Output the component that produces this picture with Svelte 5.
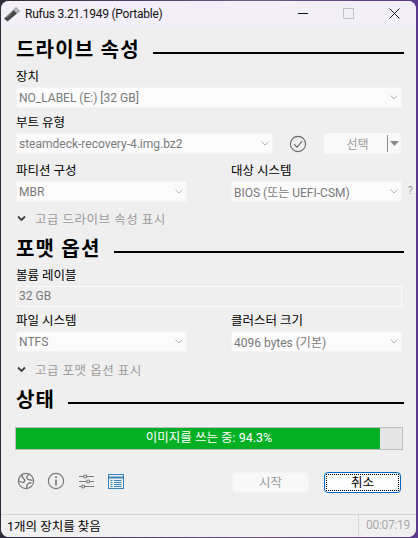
<script>
    let progress = 94.3;
</script>

{#snippet chevron()}
    <svg class="chevron" width="8" height="5" viewBox="0 0 8 5"><path d="M.5.5L4 4 7.500.5" fill="none" stroke="#b4b4b4" stroke-width="1"/></svg>
{/snippet}

{#snippet heading(text)}
    <div class="heading"><span>{text}</span><i></i></div>
{/snippet}

{#snippet dropdown(text)}
    <div class="select"><span>{text}</span>{@render chevron()}</div>
{/snippet}

{#snippet advanced(text)}
    <div class="advanced">
        <svg width="9" height="7" viewBox="0 0 9 7"><path d="M1 1.500l3.500 3.500 3.500-3.500" fill="none" stroke="#404040" stroke-width="1.800"/></svg>
        <span>{text}</span>
    </div>
{/snippet}

<div class="window">
    <div class="titlebar">
        <svg class="usb" width="16" height="16" viewBox="0 0 16 16">
            <path d="M0 12.500L9.500 4l3.500 3.500L3.500 15.500z" fill="#484848"/>
            <path d="M10 3.500L12 1.500l3.500 3.500-2 2z" fill="#bdbdbd" stroke="#666" stroke-width=".6"/>
            <path d="M2.500 11.500L8.500 6" stroke="#8f8f8f" stroke-width="1"/>
        </svg>
        <span class="title">Rufus 3.21.1949 (Portable)</span>
        <div class="controls">
            <span class="min"></span>
            <span class="max"></span>
            <svg class="close" width="11" height="11" viewBox="0 0 11 11"><path d="M.5.5l10 10M10.500.5l-10 10" stroke="#222" stroke-width="1"/></svg>
        </div>
    </div>

    <div class="content">
        {@render heading('드라이브 속성')}
        <div class="label first">장치</div>
        {@render dropdown('NO_LABEL (E:) [32 GB]')}

        <div class="label boot-label">부트 유형</div>
        <div class="boot">
            {@render dropdown('steamdeck-recovery-4.img.bz2')}
            <svg class="check" width="18" height="18" viewBox="0 0 18 18">
                <circle cx="9" cy="9" r="7.600" fill="none" stroke="#666" stroke-width="1.100"/>
                <path d="M5 9.200l3 3 5.200-6" fill="none" stroke="#666" stroke-width="1.100"/>
            </svg>
            <div class="split">
                <span class="split-text">선택</span>
                <i></i>
                <svg width="9" height="5" viewBox="0 0 9 5"><path d="M0 0h9L4.500 5z" fill="#8a8a8a"/></svg>
            </div>
        </div>

        <div class="two">
            <div>
                <div class="label">파티션 구성</div>
                {@render dropdown('MBR')}
            </div>
            <div>
                <div class="label">대상 시스템</div>
                {@render dropdown('BIOS (또는 UEFI-CSM)')}
                <span class="help">?</span>
            </div>
        </div>
        {@render advanced('고급 드라이브 속성 표시')}

        {@render heading('포맷 옵션')}
        <div class="label first">볼륨 레이블</div>
        <div class="input">32 GB</div>

        <div class="two tight">
            <div>
                <div class="label">파일 시스템</div>
                {@render dropdown('NTFS')}
            </div>
            <div>
                <div class="label">클러스터 크기</div>
                {@render dropdown('4096 bytes (기본)')}
            </div>
        </div>
        {@render advanced('고급 포맷 옵션 표시')}

        {@render heading('상태')}
        <div class="progress">
            <div class="fill" style="width: {progress}%"></div>
            <span>이미지를 쓰는 중: {progress}%</span>
        </div>

        <div class="actions">
            <div class="tools">
                <svg width="18" height="18" viewBox="0 0 18 18" fill="none" stroke="#777" stroke-width="1.200">
                    <circle cx="9" cy="9" r="7.600"/>
                    <path d="M5.500 2.500C4 5 6 6 7 7s1 2 0 3-3 0-5-1M12 2.500c-2 1-3 3-1.500 4.500s3 .5 5 1.500M10 16c-1-2 0-3.500 1.500-4.500s2-1 3-.5" stroke-width="1.300"/>
                </svg>
                <svg width="18" height="18" viewBox="0 0 18 18" fill="none" stroke="#777" stroke-width="1.200">
                    <circle cx="9" cy="9" r="7.600"/>
                    <path d="M9 7.500v6" stroke-width="1.600"/>
                    <path d="M9 4.300v1.800" stroke-width="1.600"/>
                </svg>
                <svg width="15" height="15" viewBox="0 0 15 15" fill="none" stroke="#777" stroke-width="1.100">
                    <path d="M0 2.500h4.500M8 2.500h7M0 7.500h7.500M11 7.500h4M0 12.500h2.500M6 12.500h9"/>
                    <circle cx="6.200" cy="2.500" r="1.500"/>
                    <circle cx="9.200" cy="7.500" r="1.500"/>
                    <circle cx="4.200" cy="12.500" r="1.500"/>
                </svg>
                <svg width="16" height="15" viewBox="0 0 16 15" fill="none" stroke="#3a84bd">
                    <rect x=".5" y=".5" width="15" height="14"/>
                    <path d="M1 3.500h14" stroke-width="2"/>
                    <path d="M2.500 6.500h2M6 6.500h7.500M2.500 8.500h2M6 8.500h7.500M2.500 10.500h2M6 10.500h7.500M2.500 12.500h2M6 12.500h7.500"/>
                </svg>
            </div>
            <div class="buttons">
                <div class="btn">시작</div>
                <div class="btn focused"><span>취소</span></div>
            </div>
        </div>
    </div>

    <div class="statusbar">
        <span class="status">1개의 장치를 찾음</span>
        <span class="time">00:07:19</span>
    </div>
</div>

<style>
    :global(body) {
        margin: 0;
        background: linear-gradient(90deg, #2e2a3a 0%, #6c5a86 60%, #5b3a8c 100%);
    }

    .window {
        box-sizing: border-box;
        width: 415px;
        height: 536px;
        margin: 1px 0 0 1px;
        display: flex;
        flex-direction: column;
        background: #efefef;
        border-radius: 8px;
        overflow: hidden;
        font-family: Roboto, "Noto Sans CJK KR", sans-serif;
        font-size: 12px;
        color: #000;
    }

    .titlebar {
        height: 25px;
        flex: none;
        display: flex;
        align-items: center;
        background: #f3eff8;
    }

    .usb {
        margin: 0 5px 0 3px;
    }

    .title {
        font-size: 12px;
        letter-spacing: -0.25px;
        color: #111;
    }

    .controls {
        margin-left: auto;
        display: flex;
        align-items: center;
    }

    .min {
        width: 10px;
        height: 1px;
        background: #111;
        margin-right: 35px;
    }

    .max {
        width: 9px;
        height: 9px;
        border: 1px solid #c4c4c4;
        margin-right: 35px;
    }

    .close {
        margin-right: 16px;
    }

    .content {
        flex: 1;
        padding: 0 14px 0 15px;
        display: flex;
        flex-direction: column;
    }

    .heading {
        height: 26px;
        margin-top: 10px;
        margin-right: -2px;
        display: flex;
        align-items: center;
        gap: 13px;
        font-size: 20px;
        font-weight: 700;
        letter-spacing: 1.2px;
        line-height: 26px;
        white-space: nowrap;
    }

    .heading:first-child {
        margin-top: 11px;
    }

    .heading i {
        flex: 1;
        height: 2px;
        margin-top: 6px;
        background: #000;
    }

    .label {
        height: 16px;
        line-height: 16px;
        margin-top: 9px;
        margin-bottom: 2px;
        font-size: 12.5px;
        white-space: nowrap;
    }

    .label.first {
        margin-top: 6px;
    }

    .label.boot-label {
        margin-top: 7px;
    }

    .tight .label {
        margin-top: 6px;
    }

    .select {
        box-sizing: border-box;
        height: 21px;
        padding: 0 3px 0 2px;
        display: flex;
        align-items: center;
        justify-content: space-between;
        background: #fbfbfb;
        border: 1px solid #f3f3f3;
        border-radius: 2px;
        color: #7a7a7a;
        white-space: nowrap;
    }

    .boot {
        display: flex;
        align-items: center;
    }

    .boot > .select {
        width: 257px;
    }

    .check {
        margin-left: 16px;
    }

    .split {
        box-sizing: border-box;
        width: 77px;
        height: 21px;
        margin-left: 17px;
        display: flex;
        align-items: center;
        background: #f9f9f9;
        border-radius: 4px;
        color: #9a9a9a;
    }

    .split-text {
        flex: 1;
        text-align: center;
        padding-left: 4px;
    }

    .split i {
        width: 1px;
        height: 17px;
        background: #8f8f8f;
        margin-right: 2px;
    }

    .split svg {
        margin-right: 2px;
    }

    .two {
        display: grid;
        grid-template-columns: 171px 171px;
        column-gap: 44px;
    }

    .two > div {
        position: relative;
    }

    .help {
        position: absolute;
        right: -11px;
        bottom: 5px;
        font-size: 11px;
        color: #a0a0a0;
    }

    .advanced {
        height: 16px;
        margin-top: 8px;
        padding-left: 1px;
        display: flex;
        align-items: center;
        gap: 9px;
        font-size: 12.5px;
        color: #9b9b9b;
        letter-spacing: 0.5px;
    }

    .tight + .advanced {
        margin-top: 9px;
    }

    .input {
        box-sizing: border-box;
        height: 21px;
        padding: 0 2px;
        line-height: 19px;
        border: 1px solid #fbfbfb;
        color: #7a7a7a;
    }

    .progress {
        box-sizing: border-box;
        position: relative;
        height: 23px;
        margin: 14px -1px 0 -1px;
        background: #e6e6e6;
        border: 1px solid #bcbcbc;
    }

    .fill {
        height: 100%;
        background: #06b025;
    }

    .progress span {
        position: absolute;
        inset: 0;
        text-align: center;
        line-height: 19px;
        font-size: 12.5px;
        color: #fff;
    }

    .actions {
        margin-top: 22px;
        display: flex;
        align-items: flex-start;
        justify-content: space-between;
    }

    .tools {
        display: grid;
        grid-template-columns: repeat(4, 30px);
        justify-items: center;
        align-items: center;
        height: 18px;
        margin-left: -5px;
    }

    .buttons {
        display: flex;
        gap: 15px;
        margin-right: 1px;
    }

    .btn {
        box-sizing: border-box;
        width: 77px;
        height: 21px;
        line-height: 19px;
        text-align: center;
        background: #f8f8f8;
        border: 1px solid #f3f3f3;
        border-radius: 4px;
        font-size: 12.5px;
        color: #9a9a9a;
    }

    .btn.focused {
        background: #fdfdfd;
        border: 1px solid #0067c0;
        color: #000;
        padding: 1px;
        line-height: 15px;
    }

    .btn.focused span {
        display: block;
        height: 100%;
        box-sizing: border-box;
        border: 1px dotted #000;
    }

    .statusbar {
        height: 22px;
        flex: none;
        display: flex;
        align-items: center;
        justify-content: space-between;
        background: #f0f0f0;
        border-top: 1px solid #d6d6d6;
        padding-left: 6px;
        font-size: 12.5px;
    }

    .status {
        padding-bottom: 2px;
    }

    .time {
        box-sizing: border-box;
        width: 58px;
        height: 100%;
        padding-left: 7px;
        line-height: 20px;
        font-size: 12px;
        letter-spacing: -0.3px;
        border-left: 1px solid #d6d6d6;
        color: #a8a8a8;
    }
</style>
